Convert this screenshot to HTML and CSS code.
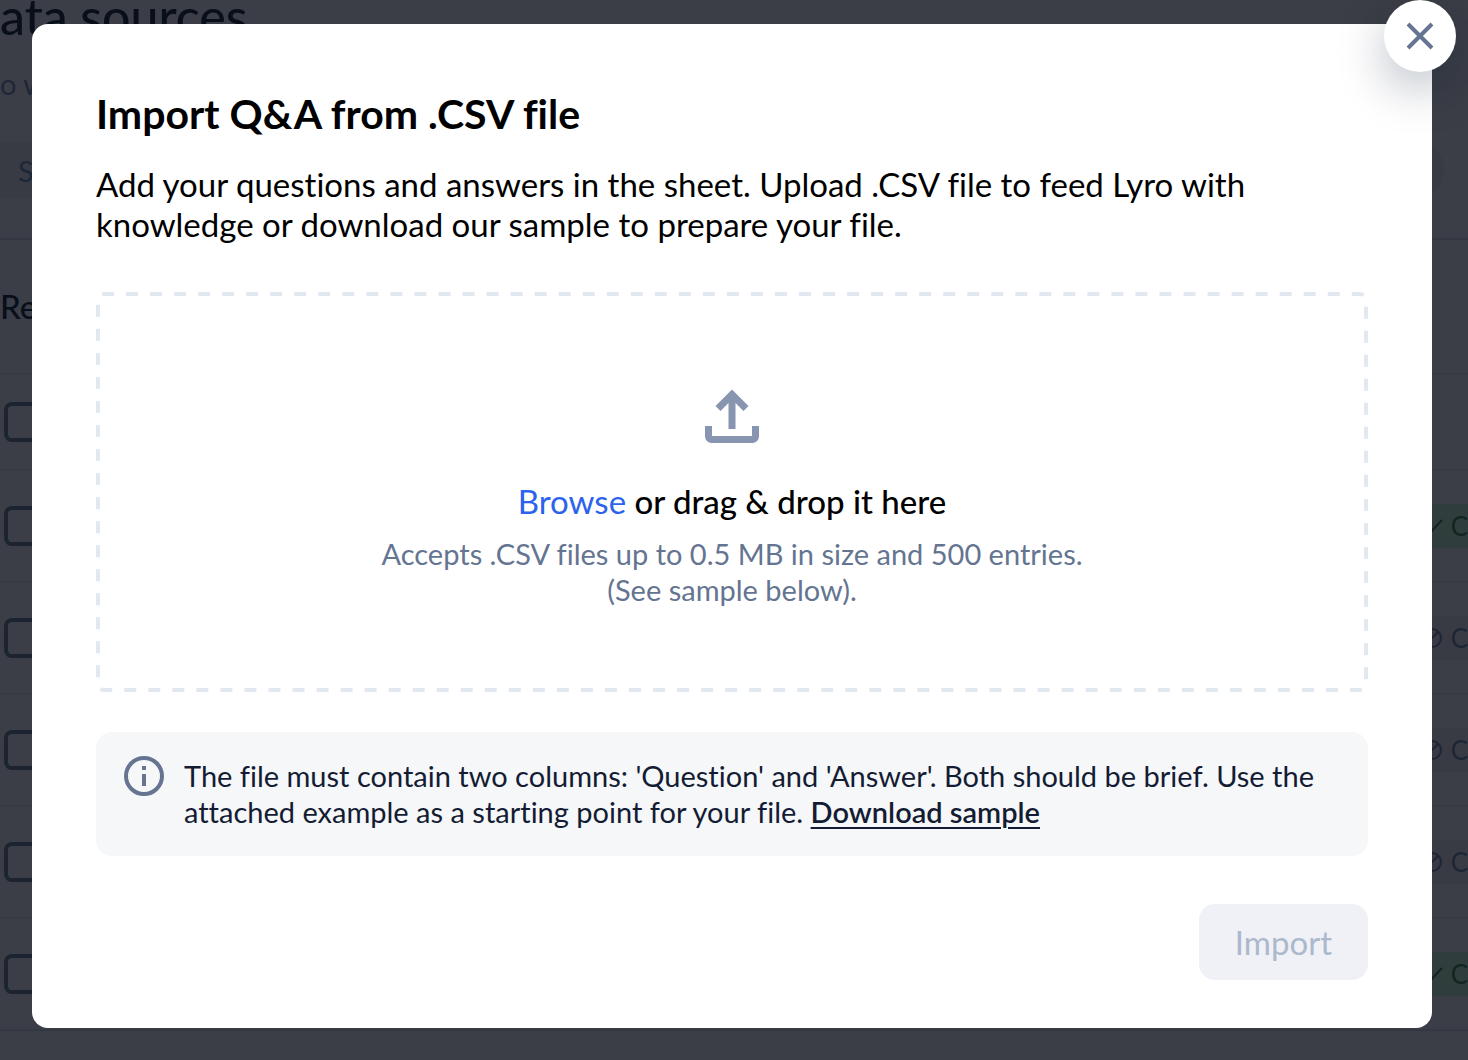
FILE: index.html
```html
<!DOCTYPE html>
<html lang="en">
<head>
    <meta charset="UTF-8">
    <meta name="viewport" content="width=device-width, initial-scale=1.0">
    <title>Import Q&amp;A</title>
    <link rel="stylesheet" href="styles.css">
</head>
<body>
    <!-- dimmed page behind the dialog -->
    <div class="page" inert>
        <h1 class="page-title">ata sources</h1>
        <p class="page-intro">o w</p>
        <input class="search" type="text" placeholder="S" aria-label="Search">
        <h2 class="list-title">Re</h2>
        <table class="list">
            <tr class="list-head">
                <td><input type="checkbox" aria-label="Select all"></td>
                <td></td>
            </tr>
            <tr>
                <td><input type="checkbox" aria-label="Select row 1"></td>
                <td><span class="badge badge-green"><svg viewBox="0 0 24 24"><path d="M3 15l6 6L23 6"/></svg>C</span></td>
            </tr>
            <tr>
                <td><input type="checkbox" aria-label="Select row 2"></td>
                <td><span class="badge"><svg viewBox="0 0 24 24"><circle cx="13" cy="12" r="9"/><path d="M7 18L19 6"/></svg>C</span></td>
            </tr>
            <tr>
                <td><input type="checkbox" aria-label="Select row 3"></td>
                <td><span class="badge"><svg viewBox="0 0 24 24"><circle cx="13" cy="12" r="9"/><path d="M7 18L19 6"/></svg>C</span></td>
            </tr>
            <tr>
                <td><input type="checkbox" aria-label="Select row 4"></td>
                <td><span class="badge"><svg viewBox="0 0 24 24"><circle cx="13" cy="12" r="9"/><path d="M7 18L19 6"/></svg>C</span></td>
            </tr>
            <tr>
                <td><input type="checkbox" aria-label="Select row 5"></td>
                <td><span class="badge badge-green"><svg viewBox="0 0 24 24"><path d="M3 15l6 6L23 6"/></svg>C</span></td>
            </tr>
        </table>
    </div>

    <div class="overlay">
        <div class="modal" role="dialog" aria-modal="true" aria-labelledby="modalTitle">
            <button class="close" type="button" aria-label="Close">
                <svg viewBox="0 0 28 28"><path d="M2 2l24 24M26 2L2 26"/></svg>
            </button>
            <h2 class="modal-title" id="modalTitle">Import Q&amp;A from .CSV file</h2>
            <p class="modal-text">Add your questions and answers in the sheet. Upload .CSV file to feed Lyro with knowledge or download our sample to prepare your file.</p>

            <div class="dropzone">
                <svg class="dropzone-border"><rect x="2" y="2" rx="6" pathLength="3312"/></svg>
                <svg class="upload-icon" viewBox="0 0 54 54">
                    <path d="M27 40V6M13 19.5L27 5.5l14 14"/>
                    <path d="M3.5 37v10.5a3 3 0 0 0 3 3h41a3 3 0 0 0 3-3V37"/>
                </svg>
                <p class="dropzone-title"><button class="browse" type="button">Browse</button> or drag &amp; drop it here</p>
                <p class="dropzone-hint">Accepts .CSV files up to 0.5 MB in size and 500 entries.<br>(See sample below).</p>
            </div>

            <div class="note">
                <svg class="note-icon" viewBox="0 0 40 40">
                    <circle cx="20" cy="20" r="18"/>
                    <path d="M20 10v4M20 18v12"/>
                </svg>
                <p class="note-text">The file must contain two columns: 'Question' and 'Answer'. Both should be brief. Use the attached example as a starting point for your file. <a href="#">Download sample</a></p>
            </div>

            <div class="actions">
                <button class="import" type="button" disabled>Import</button>
            </div>
        </div>
    </div>
</body>
</html>
```
FILE: styles.css
```css
* {
    box-sizing: border-box;
}
body {
    margin: 0;
    overflow: hidden;
    background: #3b3e46;
    font-family: Lato, sans-serif;
    font-variant-ligatures: none;
    color: #080f1a;
}
h1, h2, p {
    margin: 0;
}
button {
    font-family: inherit;
    cursor: pointer;
}
svg {
    fill: none;
    stroke: currentColor;
    flex-shrink: 0;
}

/* page */
.page {
    height: 100vh;
    overflow: hidden;
}
.page-title {
    height: 64px;
    font-size: 50px;
    line-height: 32px;
    font-weight: 500;
}
.page-intro {
    height: 78px;
    font-size: 29px;
    line-height: 40px;
    color: #1e2738;
}
.search {
    display: block;
    width: calc(100% - 24px);
    height: 56px;
    padding: 0 18px;
    border: none;
    border-radius: 0 28px 28px 0;
    background: #383b44;
    font-family: inherit;
    font-size: 29px;
}
.search::placeholder {
    color: #1e2738;
}
.list-title {
    height: 137px;
    margin-top: 40px;
    border-top: 2px solid #343843;
    border-bottom: 2px solid #373a43;
    font-size: 33px;
    line-height: 132px;
    font-weight: 500;
}
.list {
    width: 100%;
    border-collapse: separate;
    border-spacing: 0;
}
.list td {
    height: 112px;
    padding: 0 0 0 4px;
    border-bottom: 2px solid #373a43;
    vertical-align: middle;
}
.list .list-head td {
    height: 96px;
}
.list tr:last-child td {
    border-color: #343843;
}
.list td:last-child {
    text-align: right;
}
.list input {
    display: block;
    appearance: none;
    width: 40px;
    height: 40px;
    margin: 0;
    border: 4px solid #1b2430;
    border-radius: 8px;
}
.badge {
    display: inline-flex;
    align-items: center;
    gap: 8px;
    height: 44px;
    padding-left: 16px;
    background: #383b44;
    font-size: 26px;
    color: #1e2534;
    vertical-align: middle;
}
.badge svg {
    width: 24px;
    height: 24px;
    stroke-width: 2;
}
.badge-green {
    background: #2f3d3c;
    color: #13241f;
}

/* dialog */
.overlay {
    position: fixed;
    inset: 0;
    padding: 24px 36px 32px 32px;
}
.modal {
    position: relative;
    padding: 64px 64px 48px;
    border-radius: 16px;
    background: #fff;
    color: #000;
}
.close {
    position: absolute;
    top: -24px;
    right: -24px;
    display: flex;
    align-items: center;
    justify-content: center;
    width: 72px;
    height: 72px;
    padding: 0;
    border: none;
    border-radius: 50%;
    background: #fff;
    box-shadow: 0 16px 48px rgba(0, 20, 51, 0.28);
    color: #647491;
}
.close svg {
    width: 28px;
    height: 28px;
    stroke-width: 4;
}
.modal-title {
    margin-bottom: 24px;
    font-size: 41px;
    line-height: 52px;
    font-weight: 700;
}
.modal-text {
    margin-bottom: 48px;
    font-size: 33px;
    line-height: 40px;
}
.dropzone {
    position: relative;
    display: flex;
    flex-direction: column;
    align-items: center;
    margin-bottom: 40px;
    padding: 97px 32px 84px;
    text-align: center;
}
.dropzone-border {
    position: absolute;
    inset: 0;
    width: 100%;
    height: 100%;
    color: #e2e8ef;
    pointer-events: none;
}
.dropzone-border rect {
    width: calc(100% - 4px);
    height: calc(100% - 4px);
    stroke-width: 4;
    stroke-dasharray: 12 12;
    stroke-dashoffset: 2;
}
.upload-icon {
    width: 54px;
    height: 54px;
    margin-bottom: 38px;
    stroke-width: 7;
    color: #8895b0;
}
.dropzone-title {
    margin-bottom: 15px;
    font-size: 33px;
    line-height: 40px;
    font-weight: 500;
}
.browse {
    padding: 0;
    border: none;
    background: none;
    font-size: 33px;
    line-height: 40px;
    color: #2b62ee;
}
.dropzone-hint {
    font-size: 29px;
    line-height: 36px;
    color: #647491;
}
.note {
    display: flex;
    gap: 20px;
    margin-bottom: 48px;
    padding: 24px 28px 26px;
    border-radius: 16px;
    background: #f5f7f9;
}
.note-icon {
    width: 40px;
    height: 40px;
    stroke-width: 4;
    color: #647491;
}
.note-text {
    padding-top: 2px;
    font-size: 29px;
    line-height: 36px;
    color: #141c33;
}
.note-text a {
    color: inherit;
    font-weight: 600;
    text-decoration-thickness: 2px;
    text-underline-offset: 4px;
}
.actions {
    display: flex;
    justify-content: flex-end;
}
.import {
    height: 76px;
    padding: 0 36px;
    border: none;
    border-radius: 16px;
    background: #eff1f6;
    font-size: 33px;
    color: #acb8cb;
    cursor: default;
}
```
